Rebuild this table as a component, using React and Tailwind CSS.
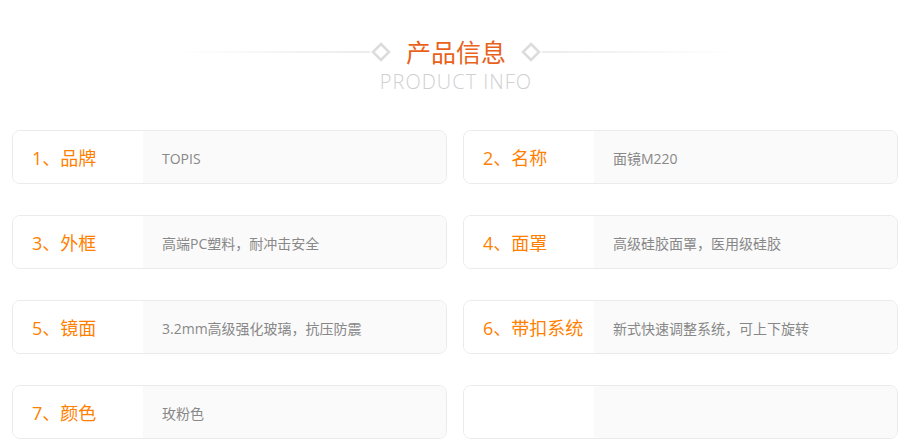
const items = [
  ['1、品牌', 'TOPIS'],
  ['2、名称', '面镜M220'],
  ['3、外框', '高端PC塑料，耐冲击安全'],
  ['4、面罩', '高级硅胶面罩，医用级硅胶'],
  ['5、镜面', '3.2mm高级强化玻璃，抗压防震'],
  ['6、带扣系统', '新式快速调整系统，可上下旋转'],
  ['7、颜色', '玫粉色'],
  ['', ''],
]

function Diamond() {
  return (
    <svg width="22" height="22" viewBox="0 0 22 22" className="shrink-0">
      <path d="M11 3 L19 11 L11 19 L3 11 Z" fill="none" stroke="#dcdcdc" strokeWidth="2.6" />
    </svg>
  )
}

export default function App() {
  return (
    <div
      className="w-[910px] h-[441px] bg-white overflow-hidden px-3"
      style={{ fontFamily: '"Open Sans", "Noto Sans CJK SC", sans-serif' }}
    >
      <div className="pt-[36px] flex flex-col items-center">
        <div className="flex items-center h-8 ml-[2px]">
          <div className="w-[192px] h-[2px] bg-gradient-to-r from-transparent to-[#ececec]" />
          <Diamond />
          <h2 className="mx-[14px] text-[25px] leading-8 text-[#e8621c] font-normal">
            产品信息
          </h2>
          <Diamond />
          <div className="w-[192px] h-[2px] bg-gradient-to-l from-transparent to-[#ececec]" />
        </div>
        <div className="mt-[2px] ml-[2px] text-[20px] leading-6 text-[#d0d0d0] font-light tracking-[1px]">
          PRODUCT INFO
        </div>
      </div>

      <div className="mt-[36px] grid grid-cols-2 gap-x-4 gap-y-[31px]">
        {items.map(([label, value], i) => (
          <div
            key={i}
            className="flex h-[54px] border border-[#ebebeb] rounded-lg overflow-hidden"
          >
            <div className="w-[130px] shrink-0 bg-white flex items-center pl-[19px] pt-[2px] text-[18px] text-[#ff7f00]">
              {label}
            </div>
            <div className="flex-1 bg-[#fafafa] flex items-center pl-[19px] pt-[2px] text-[14px] text-[#888]">
              {value}
            </div>
          </div>
        ))}
      </div>
    </div>
  )
}
